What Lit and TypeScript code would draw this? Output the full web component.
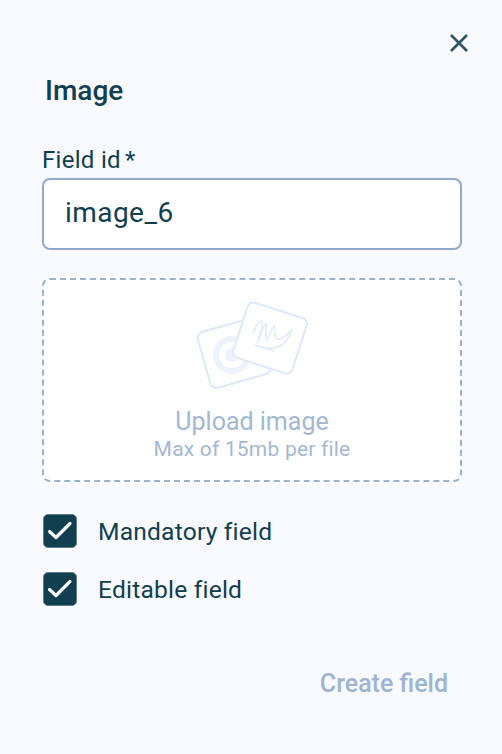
import { LitElement, html, css, svg } from "lit";
import { customElement } from "lit/decorators.js";

const check = svg`<svg class="tick" viewBox="0 0 34 34" width="34" height="34" fill="none"><path d="M6.5 17.5 L13 23.5 L27 9.5" stroke="#fff" stroke-width="3.2" stroke-linecap="round" stroke-linejoin="round"/></svg>`;

@customElement("app-root")
export class AppRoot extends LitElement {
  static styles = css`
    :host { display: block; width: 502px; height: 754px; background: #f8faff; font-family: Roboto, "Noto Sans", sans-serif; color: #113f50; box-sizing: border-box; overflow: hidden; }
    .panel { display: flex; flex-direction: column; height: 754px; box-sizing: border-box; padding: 24px 40px 0 42px; }
    .top { display: flex; justify-content: flex-end; height: 36px; margin-right: -7px; }
    .close { display: block; margin: 9px 0 0 0; }
    h1 { font-size: 28px; font-weight: 500; line-height: 32px; margin: 15px 0 0 3px; letter-spacing: 0; }
    label { display: block; font-size: 24px; line-height: 28px; margin-top: 39px; letter-spacing: 0.3px; }
    .star { font-size: 24px; margin-left: 4px; }
    .input { height: 72px; box-sizing: border-box; border: 2px solid #8faacb; border-radius: 8px; background: #fff; font-size: 28px; line-height: 66px; padding-left: 21px; margin-top: 4px; letter-spacing: 0.45px; }
    .drop { margin-top: 28px; height: 204px; box-sizing: border-box; border: 2px dashed #9cb3d0; border-radius: 8px; background: #fff; display: flex; flex-direction: column; align-items: center; padding-top: 16px; }
    .art { display: block; }
    .up { font-size: 25px; line-height: 28px; color: #a3b8d3; margin-top: 12px; }
    .max { font-size: 21px; line-height: 26px; color: #a3b8d3; margin-top: 0; letter-spacing: 0.2px; }
    .checks { display: flex; flex-direction: column; gap: 24px; margin-top: 32px; padding-left: 1px; }
    .row { display: flex; align-items: center; gap: 21px; font-size: 24.6px; height: 34px; letter-spacing: 0.2px; }
    .lbl { padding-top: 1px; }
    .box { width: 34px; height: 34px; box-sizing: border-box; border-radius: 5px; background: #113f50; border: 1px solid #5c7e8c; flex: none; display: block; }
    .tick { display: block; margin: -1px; }
    .foot { display: flex; justify-content: flex-end; margin-top: 63px; padding-right: 14px; }
    .create { font-size: 25px; font-weight: 500; color: #9db5d2; line-height: 30px; }
  `;

  render() {
    return html`<div class="panel">
      <div class="top">
        <svg class="close" width="20" height="20" viewBox="0 0 20 20" fill="none"><path d="M2 2 L18 18 M18 2 L2 18" stroke="#2f5666" stroke-width="2.6"/></svg>
      </div>
      <h1>Image</h1>
      <label>Field id<span class="star">*</span></label>
      <div class="input">image_6</div>
      <div class="drop">
        <svg class="art" width="124" height="100" viewBox="190 295 124 100" fill="none">
          <g transform="rotate(-16 234 352)">
            <rect x="203" y="323" width="62" height="58" rx="6" fill="#fff" stroke="#dce9f9" stroke-width="2"/>
          </g>
          <circle cx="232" cy="354" r="16" stroke="#edf3fc" stroke-width="6"/>
          <circle cx="232" cy="354" r="7" fill="#edf3fc"/>
          <g transform="rotate(18 270 337)">
            <rect x="239" y="308" width="62" height="58" rx="6" fill="#fff" stroke="#dce9f9" stroke-width="2"/>
          </g>
          <g transform="translate(170 285) scale(0.3333)" stroke="#e3edfa" stroke-width="5" stroke-linecap="round" stroke-linejoin="round">
            <path d="M250 142 C256 122 268 102 276 106 C282 116 268 150 262 172 C270 150 280 120 288 112 C292 126 284 150 290 164 C298 150 304 128 312 120 C318 128 308 150 320 158 C334 164 352 148 365 130 C360 156 342 182 312 186 C292 188 272 184 256 178"/>
            <path d="M256 178 L310 195"/>
          </g>
        </svg>
        <div class="up">Upload image</div>
        <div class="max">Max of 15mb per file</div>
      </div>
      <div class="checks">
        <div class="row"><span class="box">${check}</span><span class="lbl">Mandatory field</span></div>
        <div class="row"><span class="box">${check}</span><span class="lbl">Editable field</span></div>
      </div>
      <div class="foot"><span class="create">Create field</span></div>
    </div>`;
  }
}
